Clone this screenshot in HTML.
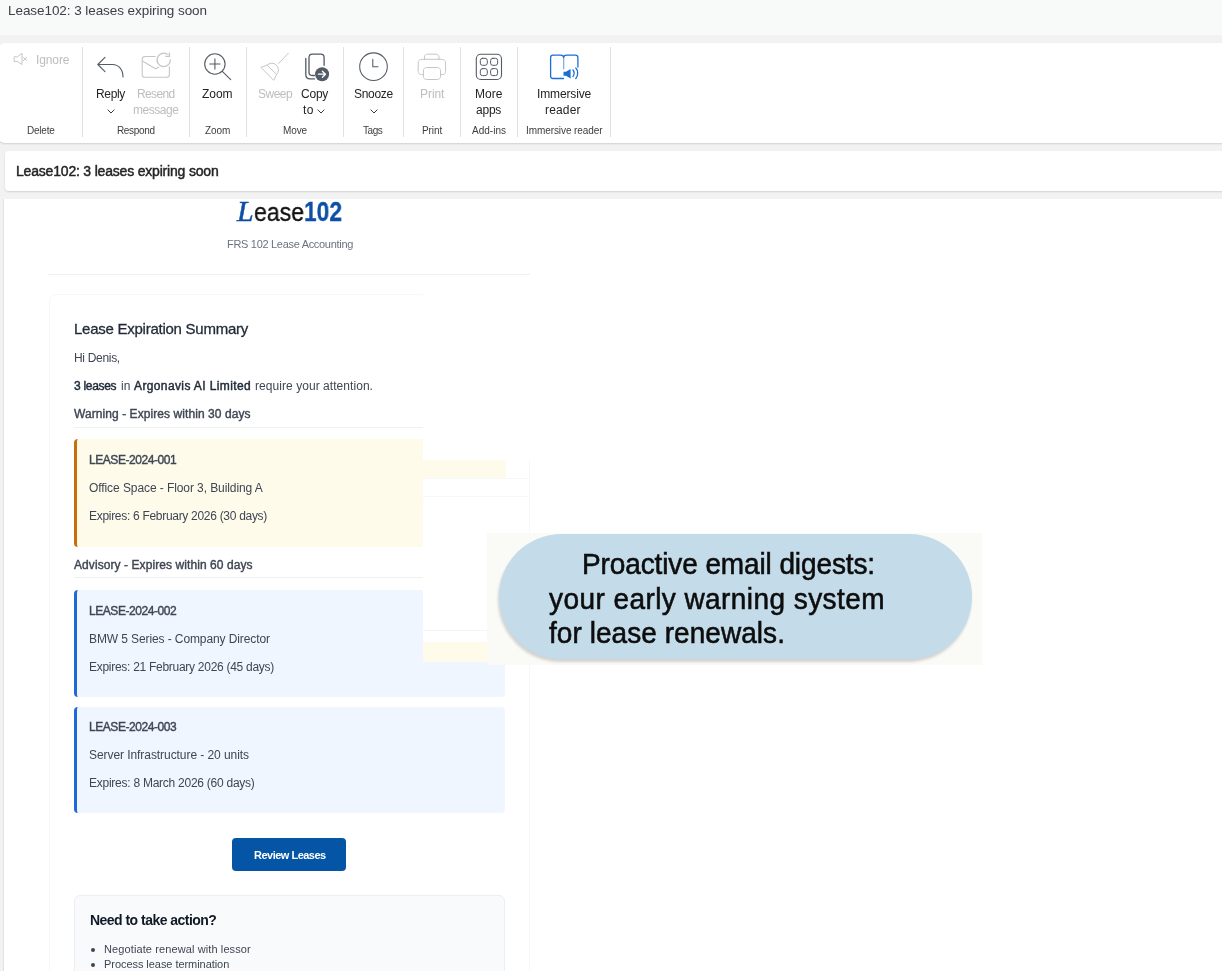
<!DOCTYPE html>
<html><head><meta charset="utf-8"><style>
html,body{margin:0;padding:0;}
body{width:1222px;height:971px;overflow:hidden;position:relative;background:#f0f0f0;font-family:"Liberation Sans",sans-serif;}
.b{position:absolute;box-sizing:border-box;}
.t{position:absolute;white-space:nowrap;line-height:normal;will-change:transform;}
svg{position:absolute;overflow:visible;}
</style></head><body>
<div class="b" style="left:0px;top:0px;width:1222px;height:35px;background:#f8f9f9;"></div>
<div class="b" style="left:0px;top:35px;width:1222px;height:936px;background:#f2f2f2;"></div>
<div class="t" style="left:8.00px;top:3.48px;font-size:13.5px;font-weight:400;color:#3b4049;letter-spacing:-0.067px;font-family:'Liberation Sans', sans-serif;">Lease102: 3 leases expiring soon</div>
<div class="b" style="left:-2px;top:42.5px;width:1240px;height:100.5px;background:#fff;border-radius:7px;box-shadow:0 1px 2px rgba(0,0,0,0.14);"></div>
<div class="b" style="left:82px;top:47px;width:1px;height:90px;background:#e1e1e1;"></div>
<div class="b" style="left:189px;top:47px;width:1px;height:90px;background:#e1e1e1;"></div>
<div class="b" style="left:246px;top:47px;width:1px;height:90px;background:#e1e1e1;"></div>
<div class="b" style="left:343px;top:47px;width:1px;height:90px;background:#e1e1e1;"></div>
<div class="b" style="left:403px;top:47px;width:1px;height:90px;background:#e1e1e1;"></div>
<div class="b" style="left:460px;top:47px;width:1px;height:90px;background:#e1e1e1;"></div>
<div class="b" style="left:517px;top:47px;width:1px;height:90px;background:#e1e1e1;"></div>
<div class="b" style="left:610px;top:47px;width:1px;height:90px;background:#e1e1e1;"></div>
<div class="t" style="left:35.60px;top:53.14px;font-size:12px;font-weight:400;color:#bdbdbd;letter-spacing:-0.104px;font-family:'Liberation Sans', sans-serif;">Ignore</div>
<div class="t" style="left:96.20px;top:87.14px;font-size:12px;font-weight:400;color:#242424;letter-spacing:-0.336px;font-family:'Liberation Sans', sans-serif;">Reply</div>
<div class="t" style="left:136.70px;top:87.14px;font-size:12px;font-weight:400;color:#bdbdbd;letter-spacing:-0.627px;font-family:'Liberation Sans', sans-serif;">Resend</div>
<div class="t" style="left:132.85px;top:103.14px;font-size:12px;font-weight:400;color:#bdbdbd;letter-spacing:-0.456px;font-family:'Liberation Sans', sans-serif;">message</div>
<div class="t" style="left:202.40px;top:86.94px;font-size:12px;font-weight:400;color:#242424;letter-spacing:-0.018px;font-family:'Liberation Sans', sans-serif;">Zoom</div>
<div class="t" style="left:257.50px;top:86.94px;font-size:12px;font-weight:400;color:#bdbdbd;letter-spacing:-0.498px;font-family:'Liberation Sans', sans-serif;">Sweep</div>
<div class="t" style="left:301.15px;top:86.94px;font-size:12px;font-weight:400;color:#242424;letter-spacing:-0.228px;font-family:'Liberation Sans', sans-serif;">Copy</div>
<div class="t" style="left:303.40px;top:103.04px;font-size:12px;font-weight:400;color:#242424;letter-spacing:0.296px;font-family:'Liberation Sans', sans-serif;">to</div>
<div class="t" style="left:353.60px;top:86.94px;font-size:12px;font-weight:400;color:#242424;letter-spacing:-0.317px;font-family:'Liberation Sans', sans-serif;">Snooze</div>
<div class="t" style="left:419.60px;top:86.94px;font-size:12px;font-weight:400;color:#bdbdbd;letter-spacing:-0.055px;font-family:'Liberation Sans', sans-serif;">Print</div>
<div class="t" style="left:474.85px;top:86.94px;font-size:12px;font-weight:400;color:#242424;letter-spacing:0.040px;font-family:'Liberation Sans', sans-serif;">More</div>
<div class="t" style="left:475.95px;top:102.94px;font-size:12px;font-weight:400;color:#242424;letter-spacing:-0.230px;font-family:'Liberation Sans', sans-serif;">apps</div>
<div class="t" style="left:536.95px;top:86.94px;font-size:12px;font-weight:400;color:#242424;letter-spacing:-0.137px;font-family:'Liberation Sans', sans-serif;">Immersive</div>
<div class="t" style="left:545.20px;top:102.94px;font-size:12px;font-weight:400;color:#242424;letter-spacing:0.152px;font-family:'Liberation Sans', sans-serif;">reader</div>
<div class="t" style="left:26.70px;top:124.95px;font-size:10px;font-weight:400;color:#3d3d3d;letter-spacing:-0.219px;font-family:'Liberation Sans', sans-serif;">Delete</div>
<div class="t" style="left:116.70px;top:124.95px;font-size:10px;font-weight:400;color:#3d3d3d;letter-spacing:-0.348px;font-family:'Liberation Sans', sans-serif;">Respond</div>
<div class="t" style="left:205.05px;top:124.95px;font-size:10px;font-weight:400;color:#3d3d3d;letter-spacing:-0.066px;font-family:'Liberation Sans', sans-serif;">Zoom</div>
<div class="t" style="left:282.80px;top:124.95px;font-size:10px;font-weight:400;color:#3d3d3d;letter-spacing:-0.114px;font-family:'Liberation Sans', sans-serif;">Move</div>
<div class="t" style="left:363.45px;top:124.95px;font-size:10px;font-weight:400;color:#3d3d3d;letter-spacing:-0.457px;font-family:'Liberation Sans', sans-serif;">Tags</div>
<div class="t" style="left:421.70px;top:124.95px;font-size:10px;font-weight:400;color:#3d3d3d;letter-spacing:-0.073px;font-family:'Liberation Sans', sans-serif;">Print</div>
<div class="t" style="left:472.00px;top:124.95px;font-size:10px;font-weight:400;color:#3d3d3d;letter-spacing:0.013px;font-family:'Liberation Sans', sans-serif;">Add-ins</div>
<div class="t" style="left:525.85px;top:124.95px;font-size:10px;font-weight:400;color:#3d3d3d;letter-spacing:-0.082px;font-family:'Liberation Sans', sans-serif;">Immersive reader</div>
<svg style="left:106.5px;top:109.3px" width="8" height="5" viewBox="0 0 8 5"><path d="M0.6 0.6 L4 4 L7.4 0.6" fill="none" stroke="#242424" stroke-width="0.9"/></svg>
<svg style="left:316.5px;top:109.3px" width="8" height="5" viewBox="0 0 8 5"><path d="M0.6 0.6 L4 4 L7.4 0.6" fill="none" stroke="#242424" stroke-width="0.9"/></svg>
<svg style="left:369.5px;top:109.3px" width="8" height="5" viewBox="0 0 8 5"><path d="M0.6 0.6 L4 4 L7.4 0.6" fill="none" stroke="#242424" stroke-width="0.9"/></svg>
<svg style="left:0;top:0" width="1222" height="150" viewBox="0 0 1222 150">
<g fill="none" stroke-linecap="round" stroke-linejoin="round">
<path d="M14.5 56.8 H17.5 L22 53.2 V64.5 L17.5 61.6 H14.5 Z" stroke="#c6c6c6" stroke-width="1"/>
<path d="M23.5 57.3 L26.8 60.6 M26.8 57.3 L23.5 60.6" stroke="#c6c6c6" stroke-width="1"/>
<path d="M105 57.3 L97.8 64.5 L105 71.7 M97.8 64.5 H112.5 C118.5 64.5 123 69.5 123 77" stroke="#535b66" stroke-width="1.1"/>
<path d="M155.3 56.5 H145 C143.3 56.6 142.2 57.8 142.2 59.5 V74.5 C142.2 76.2 143.3 77.3 145 77.3 H166.5 C168.2 77.3 169.4 76.2 169.4 74.5 V66.8" stroke="#c6c6c6" stroke-width="1.1"/>
<path d="M142.4 61.1 L155.5 68.7 L158.7 67.2" stroke="#c6c6c6" stroke-width="1.1"/>
<path d="M170.4 59.9 A6.7 6.7 0 1 1 167.05 54.1" stroke="#c6c6c6" stroke-width="1.35"/><path d="M169.4 52.4 V56.4 H165.3" stroke="#c6c6c6" stroke-width="1.35" stroke-linecap="butt" stroke-linejoin="miter"/>
<circle cx="214.9" cy="64" r="10.2" stroke="#535b66" stroke-width="1.1"/>
<path d="M222.3 71.4 L230.7 79.7 M209.8 64 H220 M214.9 58.9 V69.1" stroke="#535b66" stroke-width="1.1"/>
<path d="M267.1 65 A6.72 6.72 0 0 1 276.6 74.5 L273.7 80.4 L261.2 67.6 Z M267.1 65 L276.6 74.5 M278.6 63.4 L288.4 53.2" stroke="#c6c6c6" stroke-width="1"/>
<path d="M324.1 65.3 V57.5 C324.1 55.5 322.8 54.2 320.8 54.2 H312.3 C310.3 54.2 309 55.5 309 57.5 V72.3 C309 74.3 310.3 75.5 312.3 75.5 H314.5" stroke="#535b66" stroke-width="1.3"/>
<path d="M305.8 58.3 V74.5 C305.8 77 307.6 78.8 310 78.8 H314.6" stroke="#535b66" stroke-width="1.3"/>
<circle cx="373.5" cy="66.7" r="13.8" stroke="#535b66" stroke-width="1.05"/>
<path d="M372.8 59.3 V66.8 H378" stroke="#535b66" stroke-width="1.05"/>
<path d="M424.5 59.5 V57 C424.5 55.2 425.7 54.2 427.5 54.2 H436 C437.8 54.2 439 55.2 439 57 V59.5" stroke="#c6c6c6" stroke-width="1"/>
<path d="M423.4 74.6 H421.5 C419.5 74.6 418.2 73.3 418.2 71.3 V63 C418.2 60.8 420 59.3 422.2 59.3 H441.6 C443.8 59.3 445.6 60.8 445.6 63 V71.3 C445.6 73.3 444.3 74.6 442.3 74.6 H440.5" stroke="#c6c6c6" stroke-width="1"/>
<path d="M423.4 70.6 C423.4 68.7 424.6 67.5 426.5 67.5 H437.4 C439.3 67.5 440.5 68.7 440.5 70.6 V76.4 C440.5 78.3 439.3 79.5 437.4 79.5 H426.5 C424.6 79.5 423.4 78.3 423.4 76.4 Z" stroke="#c6c6c6" stroke-width="1"/>
<rect x="476.3" y="54.3" width="25.2" height="25.2" rx="4.5" stroke="#535b66" stroke-width="1.1"/>
<rect x="480.3" y="58.3" width="7" height="7" rx="2.2" stroke="#535b66" stroke-width="1"/>
<rect x="490.6" y="58.3" width="7" height="7" rx="2.2" stroke="#535b66" stroke-width="1"/>
<rect x="480.3" y="68.6" width="7" height="7" rx="2.2" stroke="#535b66" stroke-width="1"/>
<rect x="490.6" y="68.6" width="7" height="7" rx="2.2" stroke="#535b66" stroke-width="1"/>
<path d="M563.5 78.5 H553 Q550.6 78.5 550.6 76 V57.6 Q550.6 55.2 553 55.2 H560.5 Q563.6 55.2 563.6 57.5 Q563.6 55.2 566.6 55.2 H575.5 Q577.9 55.2 577.9 57.6 V67" stroke="#1a6fd6" stroke-width="1.3"/><path d="M563.7 57.5 V69" stroke="#1a6fd6" stroke-opacity="0.6" stroke-width="1.2"/>
</g>
<circle cx="322.1" cy="74.2" r="7" fill="#535b66"/>
<path d="M318.4 74.2 H325.4 M322.4 71.2 L325.5 74.2 L322.4 77.3" fill="none" stroke="#fff" stroke-width="1.3" stroke-linecap="round" stroke-linejoin="round"/>
<path d="M563.5 71.8 H566 L570.6 69 V78.6 L566 75.8 H563.5 Z" fill="#1a6fd6"/>
<path d="M573 70 C574.5 71.5 574.5 75 573 76.5 M575.8 68 C578.3 70.5 578.3 76 575.8 78.5" fill="none" stroke="#1a6fd6" stroke-width="1.3" stroke-linecap="round"/>
</svg>
<div class="b" style="left:5px;top:150.5px;width:1240px;height:40.5px;background:#fff;border-radius:4px;box-shadow:0 1px 2px rgba(0,0,0,0.14);"></div>
<div class="t" style="left:15.80px;top:162.93px;font-size:14px;font-weight:400;color:#242424;letter-spacing:-0.191px;font-family:'Liberation Sans', sans-serif;-webkit-text-stroke:0.45px #242424;">Lease102: 3 leases expiring soon</div>
<div class="b" style="left:3px;top:198.5px;width:1240px;height:800px;background:#fff;border-left:1px solid #e3e3e3;"></div>
<div class="t" style="left:236.50px;top:194.27px;font-size:30px;font-weight:400;color:#0d4fa6;letter-spacing:0.000px;font-family:'Liberation Serif', serif;font-style:italic;-webkit-text-stroke:0.5px #0d4fa6;">L</div>
<div class="t" style="left:254.00px;top:197.02px;font-size:26.5px;font-weight:400;color:#111111;letter-spacing:0.000px;font-family:'Liberation Sans', sans-serif;-webkit-text-stroke:0.35px #111111;transform:scale(0.8701,1);transform-origin:0 23.98px;">ease</div>
<div class="t" style="left:304.20px;top:195.66px;font-size:28px;font-weight:700;color:#0d4fa6;letter-spacing:0.000px;font-family:'Liberation Sans', sans-serif;-webkit-text-stroke:0.3px #0d4fa6;transform:scale(0.8134,1);transform-origin:0 25.34px;">102</div>
<div class="t" style="left:226.50px;top:237.74px;font-size:11px;font-weight:400;color:#6b7280;letter-spacing:-0.304px;font-family:'Liberation Sans', sans-serif;">FRS 102 Lease Accounting</div>
<div class="b" style="left:48px;top:274.2px;width:482px;height:1px;background:#f0f1f3;"></div>
<div class="b" style="left:49px;top:293.5px;width:481px;height:700px;background:#fff;border:1px solid #f6f7f8;border-radius:8px;"></div>
<div class="b" style="left:423px;top:292px;width:108px;height:167px;background:#fff;"></div>
<div class="b" style="left:423px;top:477.5px;width:107px;height:1px;background:#f6f7f8;"></div>
<div class="b" style="left:423px;top:495.5px;width:107px;height:1px;background:#f7f8f9;"></div>
<div class="t" style="left:74.20px;top:320.43px;font-size:15px;font-weight:400;color:#1f2937;letter-spacing:-0.253px;font-family:'Liberation Sans', sans-serif;-webkit-text-stroke:0.3px #1f2937;">Lease Expiration Summary</div>
<div class="t" style="left:74.20px;top:351.14px;font-size:12px;font-weight:400;color:#3e4653;letter-spacing:-0.309px;font-family:'Liberation Sans', sans-serif;">Hi Denis,</div>
<div class="t" style="left:74.20px;top:379.14px;font-size:12px;font-weight:400;color:#1f2937;letter-spacing:-0.299px;font-family:'Liberation Sans', sans-serif;-webkit-text-stroke:0.45px #1f2937;">3 leases</div>
<div class="t" style="left:120.60px;top:379.14px;font-size:12px;font-weight:400;color:#3e4653;letter-spacing:0.030px;font-family:'Liberation Sans', sans-serif;">in</div>
<div class="t" style="left:134.00px;top:379.14px;font-size:12px;font-weight:400;color:#1f2937;letter-spacing:0.381px;font-family:'Liberation Sans', sans-serif;-webkit-text-stroke:0.45px #1f2937;">Argonavis AI Limited</div>
<div class="t" style="left:255.00px;top:379.14px;font-size:12px;font-weight:400;color:#3e4653;letter-spacing:0.055px;font-family:'Liberation Sans', sans-serif;">require your attention.</div>
<div class="t" style="left:74.20px;top:407.14px;font-size:12px;font-weight:400;color:#3e4653;letter-spacing:0.072px;font-family:'Liberation Sans', sans-serif;-webkit-text-stroke:0.4px #3e4653;">Warning - Expires within 30 days</div>
<div class="b" style="left:74px;top:426.5px;width:349px;height:1px;background:#eef0f2;"></div>
<div class="b" style="left:73.5px;top:439px;width:349.5px;height:107.5px;background:#fffbeb;border-left:3px solid #cb6c0a;border-radius:4px 0 0 4px;"></div>
<div class="b" style="left:423px;top:459.6px;width:82.7px;height:18px;background:#fffbeb;"></div>
<div class="t" style="left:88.80px;top:452.94px;font-size:12px;font-weight:400;color:#3e4653;letter-spacing:-0.436px;font-family:'Liberation Sans', sans-serif;-webkit-text-stroke:0.4px #3e4653;">LEASE-2024-001</div>
<div class="t" style="left:88.80px;top:481.24px;font-size:12px;font-weight:400;color:#3e4653;letter-spacing:-0.083px;font-family:'Liberation Sans', sans-serif;">Office Space - Floor 3, Building A</div>
<div class="t" style="left:88.80px;top:509.14px;font-size:12px;font-weight:400;color:#3e4653;letter-spacing:-0.297px;font-family:'Liberation Sans', sans-serif;">Expires: 6 February 2026 (30 days)</div>
<div class="t" style="left:74.20px;top:558.14px;font-size:12px;font-weight:400;color:#3e4653;letter-spacing:0.077px;font-family:'Liberation Sans', sans-serif;-webkit-text-stroke:0.4px #3e4653;">Advisory - Expires within 60 days</div>
<div class="b" style="left:74px;top:577.2px;width:349px;height:1px;background:#eef0f2;"></div>
<div class="b" style="left:73.5px;top:590px;width:349.5px;height:106.5px;background:#eff6ff;border-left:3px solid #1f68d6;border-radius:4px 0 0 4px;"></div>
<div class="b" style="left:423px;top:630px;width:82px;height:66.5px;background:#eff6ff;border-radius:0 0 4px 0;"></div>
<div class="b" style="left:423px;top:630px;width:64px;height:12px;background:#fff;border-top:1px solid #f3f4f6;"></div>
<div class="b" style="left:423px;top:641.7px;width:64px;height:20.7px;background:#fffbeb;"></div>
<div class="t" style="left:88.80px;top:603.94px;font-size:12px;font-weight:400;color:#3e4653;letter-spacing:-0.436px;font-family:'Liberation Sans', sans-serif;-webkit-text-stroke:0.4px #3e4653;">LEASE-2024-002</div>
<div class="t" style="left:88.80px;top:632.24px;font-size:12px;font-weight:400;color:#3e4653;letter-spacing:-0.101px;font-family:'Liberation Sans', sans-serif;">BMW 5 Series - Company Director</div>
<div class="t" style="left:88.80px;top:660.14px;font-size:12px;font-weight:400;color:#3e4653;letter-spacing:-0.279px;font-family:'Liberation Sans', sans-serif;">Expires: 21 February 2026 (45 days)</div>
<div class="b" style="left:73.5px;top:706.7px;width:431.5px;height:106.6px;background:#eff6ff;border-left:3px solid #1f68d6;border-radius:4px;"></div>
<div class="t" style="left:88.80px;top:719.94px;font-size:12px;font-weight:400;color:#3e4653;letter-spacing:-0.436px;font-family:'Liberation Sans', sans-serif;-webkit-text-stroke:0.4px #3e4653;">LEASE-2024-003</div>
<div class="t" style="left:88.80px;top:748.24px;font-size:12px;font-weight:400;color:#3e4653;letter-spacing:-0.065px;font-family:'Liberation Sans', sans-serif;">Server Infrastructure - 20 units</div>
<div class="t" style="left:88.80px;top:776.14px;font-size:12px;font-weight:400;color:#3e4653;letter-spacing:-0.252px;font-family:'Liberation Sans', sans-serif;">Expires: 8 March 2026 (60 days)</div>
<div class="b" style="left:232.3px;top:838px;width:114.2px;height:32.5px;background:#0455a6;border-radius:4px;"></div>
<div class="t" style="left:253.50px;top:849.04px;font-size:11px;font-weight:700;color:#ffffff;letter-spacing:-0.505px;font-family:'Liberation Sans', sans-serif;">Review Leases</div>
<div class="b" style="left:73.5px;top:895px;width:431.5px;height:120px;background:#f9fafb;border:1px solid #eceef1;border-radius:6px;"></div>
<div class="t" style="left:89.50px;top:912.33px;font-size:14px;font-weight:700;color:#111827;letter-spacing:-0.527px;font-family:'Liberation Sans', sans-serif;">Need to take action?</div>
<div class="t" style="left:104.20px;top:942.84px;font-size:11px;font-weight:400;color:#3e4653;letter-spacing:0.108px;font-family:'Liberation Sans', sans-serif;">Negotiate renewal with lessor</div>
<div class="t" style="left:104.20px;top:957.54px;font-size:11px;font-weight:400;color:#3e4653;letter-spacing:-0.054px;font-family:'Liberation Sans', sans-serif;">Process lease termination</div>
<div class="b" style="left:91.1px;top:947.6px;width:4px;height:4px;background:#3e4653;border-radius:50%;"></div>
<div class="b" style="left:91.1px;top:962.5px;width:4px;height:4px;background:#3e4653;border-radius:50%;"></div>
<div class="b" style="left:487px;top:532.7px;width:494.5px;height:132.1px;background:#fafaf7;"></div>
<div class="b" style="left:499.3px;top:534.3px;width:472.9px;height:125.1px;background:#c4dcea;border-radius:63px;box-shadow:-1px 3px 3px rgba(0,0,0,0.16);"></div>
<div class="t" style="left:582.00px;top:549.26px;font-size:28px;font-weight:400;color:#0d0d0d;letter-spacing:-0.112px;font-family:'Liberation Sans', sans-serif;-webkit-text-stroke:0.55px #0d0d0d;transform:scale(1.0000,1.08);transform-origin:0 25.34px;">Proactive email digests:</div>
<div class="t" style="left:548.70px;top:583.86px;font-size:28px;font-weight:400;color:#0d0d0d;letter-spacing:0.431px;font-family:'Liberation Sans', sans-serif;-webkit-text-stroke:0.55px #0d0d0d;transform:scale(1.0000,1.08);transform-origin:0 25.34px;">your early warning system</div>
<div class="t" style="left:548.50px;top:617.96px;font-size:28px;font-weight:400;color:#0d0d0d;letter-spacing:0.052px;font-family:'Liberation Sans', sans-serif;-webkit-text-stroke:0.55px #0d0d0d;transform:scale(1.0000,1.08);transform-origin:0 25.34px;">for lease renewals.</div>
</body></html>
